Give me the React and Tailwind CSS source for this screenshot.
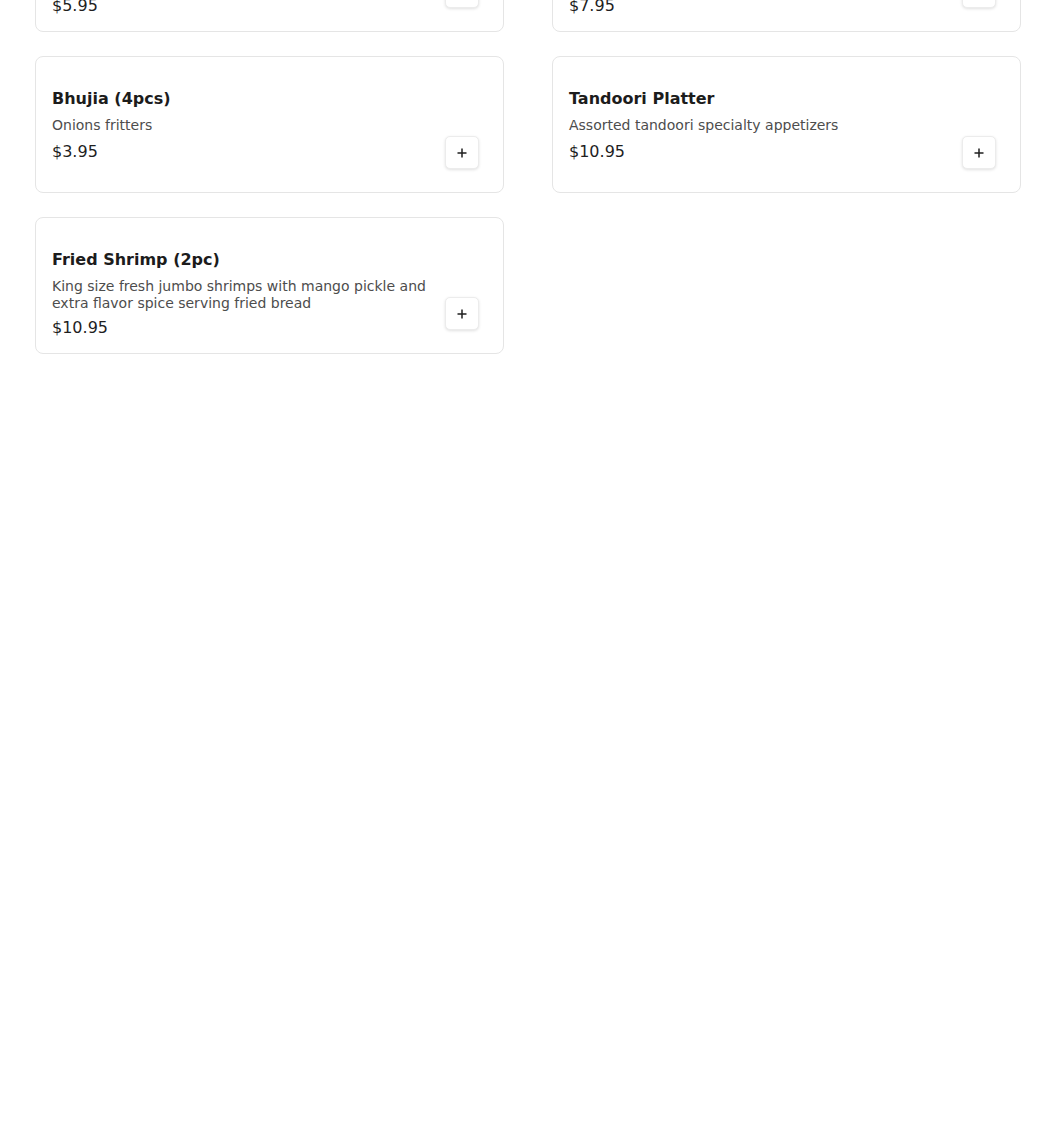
const items = [
  {
    name: 'Vegetable Samosa (2pcs)',
    desc: 'Crispy turnovers stuffed with seasoned potatoes and green peas, served with chutney',
    price: '$5.95',
  },
  {
    name: 'Chicken Pakora',
    desc: 'Tender boneless chicken pieces dipped in chickpea batter and fried until golden',
    price: '$7.95',
  },
  { name: 'Bhujia (4pcs)', desc: 'Onions fritters', price: '$3.95' },
  { name: 'Tandoori Platter', desc: 'Assorted tandoori specialty appetizers', price: '$10.95' },
  {
    name: 'Fried Shrimp (2pc)',
    desc: 'King size fresh jumbo shrimps with mango pickle and extra flavor spice serving fried bread',
    price: '$10.95',
  },
];

function PlusIcon() {
  return (
    <svg width="10" height="10" viewBox="0 0 10 10" fill="none">
      <path d="M5 0.5v9M0.5 5h9" stroke="#1f1f1f" strokeWidth="1.5" />
    </svg>
  );
}

function MenuCard({ item }) {
  return (
    <div className="flex h-[137px] items-end justify-between gap-4 rounded-lg border border-[#e5e5e5] bg-white pl-4 pr-[24px] pb-[23px] pt-[30px]">
      <div className="self-start">
        <h3 className="text-base font-bold leading-6 text-[#1c1c1c]">{item.name}</h3>
        <p className="mt-1.5 min-h-[19px] text-sm leading-[17px] text-[#4d4d4d]">{item.desc}</p>
        <p className="mt-1 text-base leading-6 text-[#1f1f1f]">{item.price}</p>
      </div>
      <button className="flex h-[33px] w-[34px] shrink-0 items-center justify-center rounded-[5px] border border-[#ececec] bg-white shadow-[0_1px_3px_rgba(0,0,0,0.12)]">
        <PlusIcon />
      </button>
    </div>
  );
}

export default function App() {
  return (
    <div className="min-h-screen overflow-hidden bg-white font-['DejaVu_Sans',sans-serif]">
      <div className="mt-[-105px] grid grid-cols-[469px_469px] gap-x-12 gap-y-6 pl-[35px] pr-[29px]">
        {items.map((item) => (
          <MenuCard key={item.name} item={item} />
        ))}
      </div>
    </div>
  );
}
